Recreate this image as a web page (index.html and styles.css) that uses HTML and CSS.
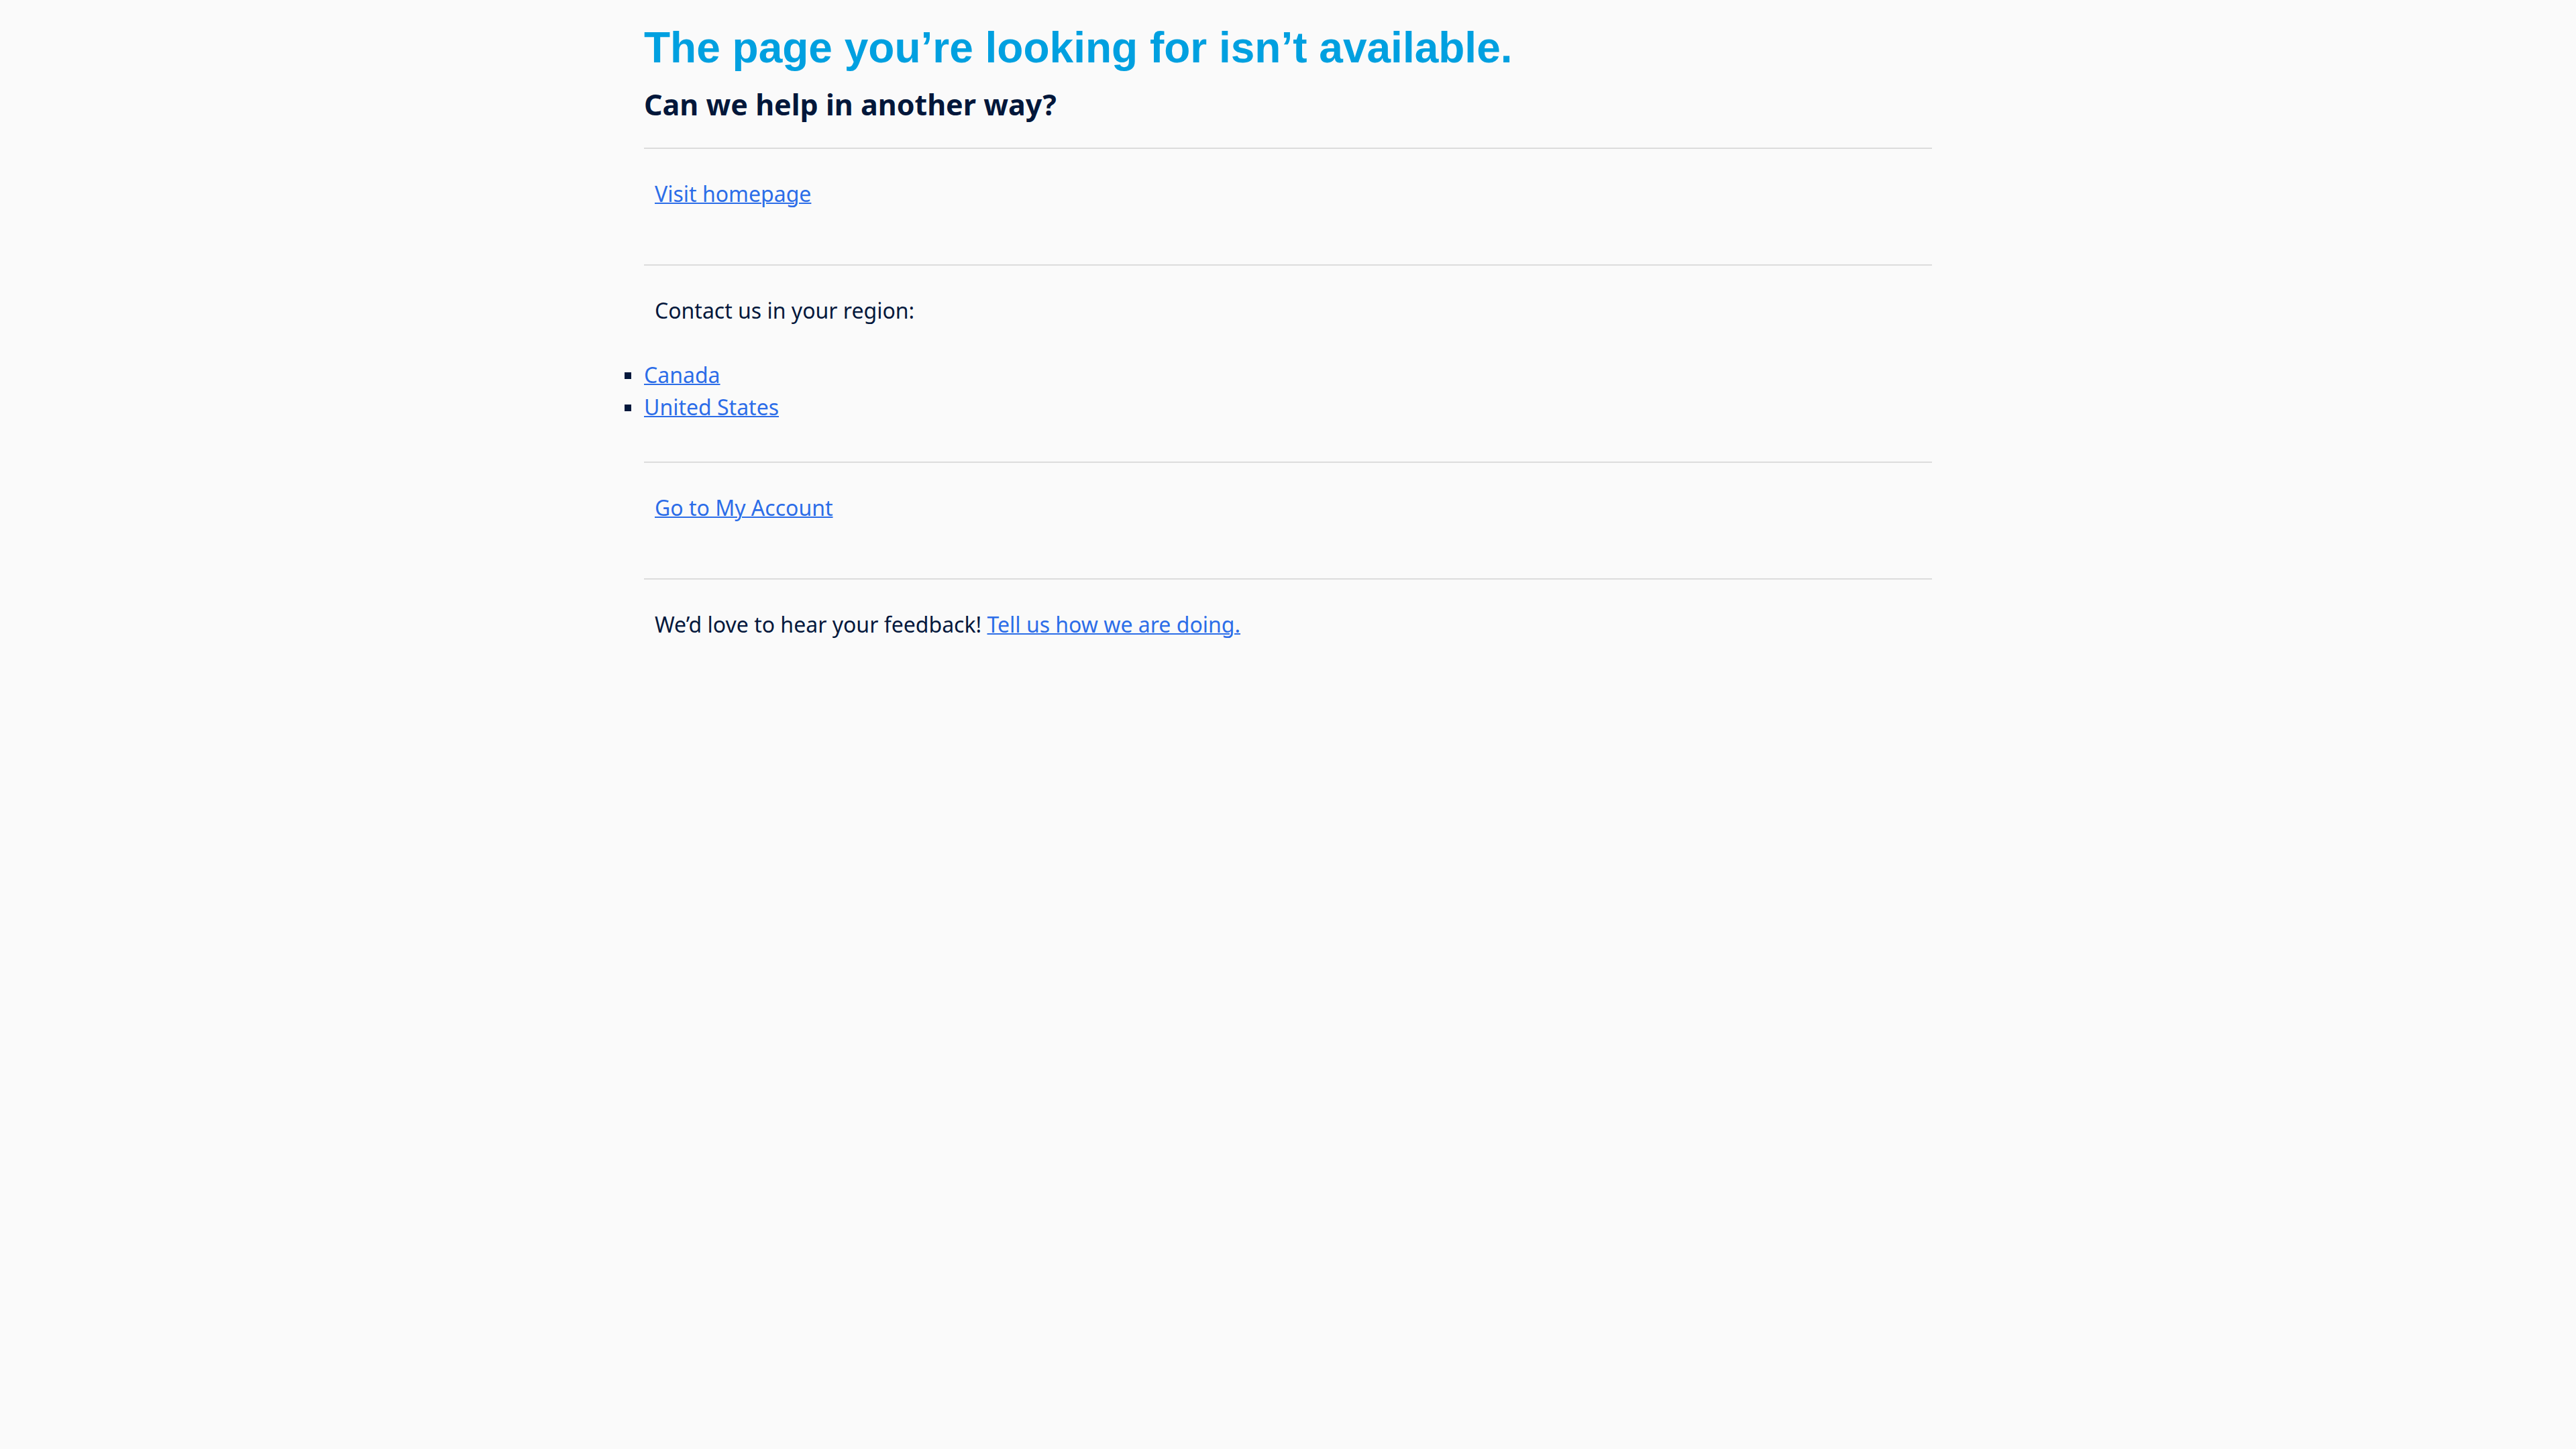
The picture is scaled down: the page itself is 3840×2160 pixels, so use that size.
FILE: index.html
```html
<!DOCTYPE html>
<html lang="en">
<head>
<meta charset="utf-8">
<title>Page not available</title>
<link rel="stylesheet" href="styles.css">
</head>
<body>
<main class="page">
  <h1 class="title">The page you’re looking for isn’t available.</h1>
  <h2 class="subtitle">Can we help in another way?</h2>
  <section class="block block-short">
    <p class="text"><a class="link" href="#">Visit homepage</a></p>
  </section>
  <section class="block block-region">
    <p class="text">Contact us in your region:</p>
    <ul class="regions">
      <li class="region"><a class="link" href="#">Canada</a></li>
      <li class="region"><a class="link" href="#">United States</a></li>
    </ul>
  </section>
  <section class="block block-short">
    <p class="text"><a class="link" href="#">Go to My Account</a></p>
  </section>
  <section class="block block-last">
    <p class="text">We’d love to hear your feedback! <a class="link" href="#">Tell us how we are doing.</a></p>
  </section>
</main>
</body>
</html>
```
FILE: styles.css
```css
html, body {
  margin: 0;
  padding: 0;
  background: #fafafa;
}

body {
  font-family: "Noto Sans", "Open Sans", sans-serif;
  color: #04183c;
}

.page {
  width: 1920px;
  margin: 0 auto;
}

.title {
  margin: 33px 0 0;
  font-family: "Liberation Sans", Arial, sans-serif;
  font-weight: 700;
  font-size: 64px;
  line-height: 76px;
  color: #00a0e0;
}

.subtitle {
  margin: 19px 0 36px;
  font-family: "Noto Sans", sans-serif;
  font-weight: 700;
  font-size: 43px;
  line-height: 56px;
  color: #02173a;
}

.block {
  border-top: 2px solid #dcdcdc;
  padding-top: 43px;
}

.block-short {
  padding-bottom: 81px;
}

.block-region {
  padding-bottom: 57px;
}

.text {
  margin: 0;
  padding-left: 16px;
  font-size: 32px;
  line-height: 48px;
}

.link {
  color: #2c6de8;
  text-decoration: underline;
  text-decoration-thickness: 2px;
}

.regions {
  list-style: none;
  margin: 48px 0 0;
  padding: 0;
  font-size: 32px;
  line-height: 48px;
}

.region::before {
  content: "";
  display: inline-block;
  width: 10px;
  height: 10px;
  background: #04183c;
  margin-left: -29px;
  margin-right: 19px;
  vertical-align: 6px;
}
```
